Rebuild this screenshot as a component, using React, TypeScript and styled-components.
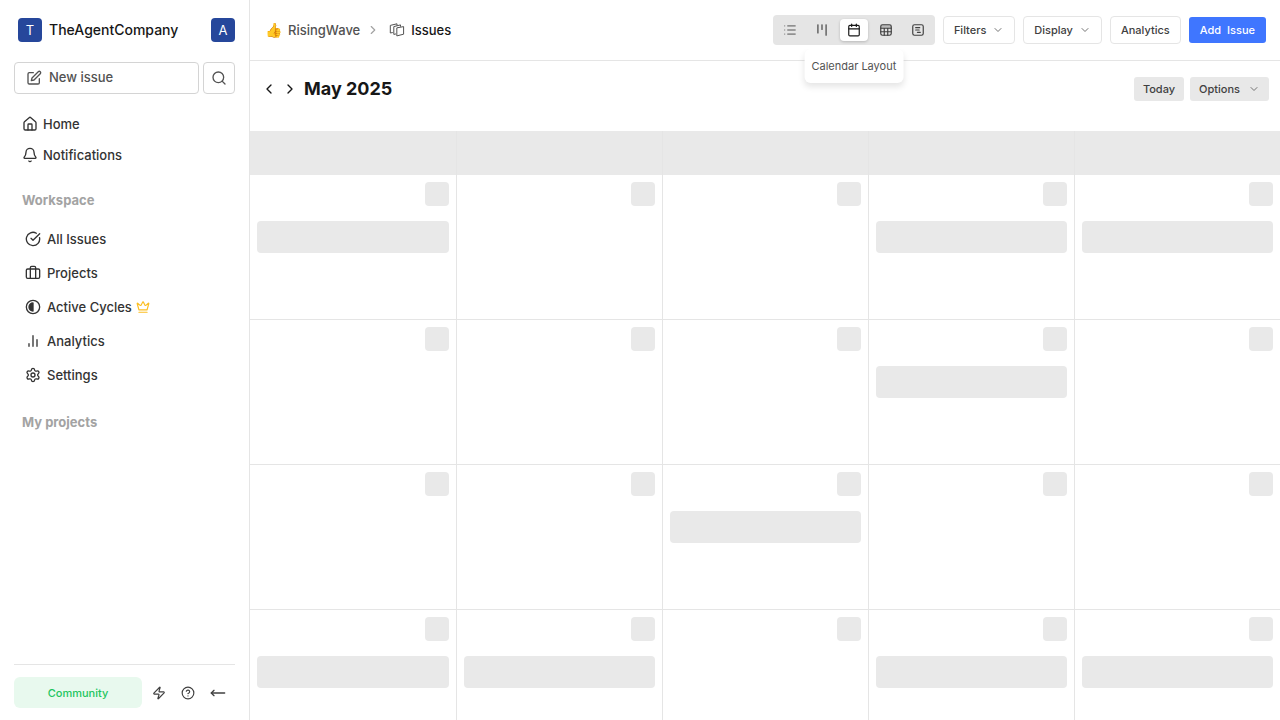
import React from "react";
import styled, { createGlobalStyle } from "styled-components";
import {
  Bell,
  Briefcase,
  Calendar,
  ChevronDown,
  ChevronLeft,
  ChevronRight,
  CircleCheckBig,
  CircleHelp,
  Crown,
  House,
  Kanban,
  List,
  MoveLeft,
  Search,
  Settings,
  Zap,
} from "lucide-react";

const GlobalStyle = createGlobalStyle`
  *, *::before, *::after { box-sizing: border-box; }
  body { margin: 0; background: #fff; color: #171717; font-family: Inter, "Liberation Sans", sans-serif; }
  button { font: inherit; color: inherit; margin: 0; padding: 0; border: 0; background: none; cursor: pointer; }
  a { color: inherit; text-decoration: none; }
  svg { flex-shrink: 0; }
`;

const Shell = styled.div`
  display: flex;
  height: 100vh;
  overflow: hidden;
`;

const Sidebar = styled.aside`
  display: flex;
  flex-direction: column;
  flex: 0 0 250px;
  padding: 0 14px;
  border-right: 1px solid #e5e5e5;
`;

const WorkspaceRow = styled.div`
  display: flex;
  align-items: center;
  height: 24px;
  margin-top: 18px;
  padding-left: 4px;
`;

const Badge = styled.span`
  display: grid;
  place-items: center;
  width: 24px;
  height: 24px;
  border-radius: 4px;
  background: #26479b;
  color: #fff;
  font-size: 13px;
  line-height: 18px;
`;

const WorkspaceName = styled.span`
  flex: 1;
  margin-left: 7px;
  font-size: 14px;
  line-height: 20px;
  font-weight: 500;
`;

const QuickActions = styled.div`
  display: flex;
  gap: 4px;
  margin-top: 20px;
`;

const OutlineButton = styled.button<{ $grow?: boolean }>`
  display: flex;
  align-items: center;
  justify-content: ${(p) => (p.$grow ? "flex-start" : "center")};
  gap: 7px;
  flex: ${(p) => (p.$grow ? "1" : "0 0 32px")};
  height: 32px;
  padding: ${(p) => (p.$grow ? "0 11px" : "0")};
  border: 1px solid #d4d4d4;
  border-radius: 4px;
  color: #525252;
  font-size: 13px;
  line-height: 18px;
  font-weight: 500;

  span { padding-bottom: 3px; }
`;

const Nav = styled.nav<{ $inset?: boolean }>`
  display: flex;
  flex-direction: column;
  margin-top: ${(p) => (p.$inset ? "13px" : "14px")};
  padding-left: ${(p) => (p.$inset ? "11px" : "8px")};
`;

const NavLink = styled.a<{ $tall?: boolean }>`
  display: flex;
  align-items: center;
  height: ${(p) => (p.$tall ? "34px" : "31px")};
  color: #333;
  font-size: 13px;
  line-height: 18px;
  font-weight: 500;

  span { margin: 0 4px 0 ${(p) => (p.$tall ? "6px" : "5px")}; }
`;

const SectionTitle = styled.h2`
  margin: 21px 8px 0;
  color: #a3a3a3;
  font-size: 13px;
  line-height: 18px;
  font-weight: 700;
`;

const SidebarFooter = styled.footer`
  display: flex;
  align-items: center;
  margin-top: auto;
  padding: 12px 9px 12px 0;
  border-top: 1px solid #e5e5e5;
`;

const Plan = styled.button`
  width: 128px;
  height: 31px;
  margin-right: 10px;
  border-radius: 6px;
  background: #e8f9ee;
  color: #22c55e;
  font-size: 11px;
  line-height: 16px;
  font-weight: 500;
`;

const FooterIcons = styled.div`
  display: flex;
  flex: 1;
  justify-content: space-between;
  color: #404040;
`;

const IconButton = styled.button`
  display: grid;
  place-items: center;
`;

const Main = styled.main`
  display: flex;
  flex-direction: column;
  flex: 1;
  min-width: 0;
`;

const TopBar = styled.header`
  display: flex;
  align-items: center;
  flex: 0 0 61px;
  padding: 0 14px 0 15px;
  border-bottom: 1px solid #e5e5e5;
`;

const Breadcrumbs = styled.nav`
  display: flex;
  align-items: center;
  flex: 1;
  font-size: 13px;
  line-height: 18px;
  font-weight: 500;
`;

const Crumb = styled.a<{ $current?: boolean }>`
  display: flex;
  align-items: center;
  gap: 6px;
  color: ${(p) => (p.$current ? "#171717" : "#525252")};

  svg { color: #525252; }
`;

const CrumbDivider = styled.span`
  display: flex;
  margin: 0 9px 0 6px;
  color: #a3a3a3;
`;

const Emoji = styled.span`
  width: 17px;
  font-size: 14px;
  line-height: 18px;
`;

const Toolbar = styled.div`
  display: flex;
  align-items: center;
  gap: 8px;
`;

const LayoutSwitch = styled.div`
  display: flex;
  gap: 4px;
  padding: 4px 3px;
  border-radius: 4px;
  background: #e5e5e5;
`;

const LayoutOption = styled.button<{ $active?: boolean }>`
  position: relative;
  display: grid;
  place-items: center;
  width: 28px;
  height: 22px;
  border-radius: 4px;
  background: ${(p) => (p.$active ? "#fff" : "transparent")};
  color: ${(p) => (p.$active ? "#171717" : "#404040")};
  box-shadow: ${(p) => (p.$active ? "0 1px 3px rgba(0, 0, 0, 0.2)" : "none")};
`;

const Tooltip = styled.span`
  position: absolute;
  top: 30px;
  left: 50%;
  transform: translateX(-50%);
  padding: 9px 7px;
  border-radius: 6px;
  background: #fff;
  color: #525252;
  font-size: 11px;
  line-height: 16px;
  white-space: nowrap;
  box-shadow: 0 4px 6px rgba(0, 0, 0, 0.1);
  clip-path: inset(0 -12px -12px -12px);
`;

const BarButton = styled.button<{ $kind?: "primary" | "muted" }>`
  display: flex;
  align-items: center;
  gap: ${(p) => (p.$kind === "muted" ? "8px" : "6px")};
  height: ${(p) => (p.$kind === "primary" ? "26px" : p.$kind === "muted" ? "24px" : "28px")};
  padding: ${(p) => (p.$kind === "muted" ? "0 9px" : p.$kind === "primary" ? "0 11px" : "0 10px")};
  border: ${(p) => (p.$kind ? "0" : "1px solid #e5e5e5")};
  border-radius: ${(p) => (p.$kind ? "3px" : "4px")};
  background: ${(p) => (p.$kind === "primary" ? "#3f76ff" : p.$kind === "muted" ? "#e8e8e8" : "#fff")};
  color: ${(p) => (p.$kind === "primary" ? "#fff" : "#404040")};
  font-size: 11px;
  line-height: 16px;
  font-weight: 500;
  white-space: nowrap;

  svg { color: #737373; }
`;

const CalendarHeader = styled.div`
  display: flex;
  align-items: center;
  flex: 0 0 56px;
  gap: 6px;
  margin-bottom: 14px;
  padding: 0 11px;
`;

const MonthArrows = styled.div`
  display: flex;
  gap: 5px;
`;

const MonthTitle = styled.h1`
  flex: 1;
  margin: 0;
  font-size: 18px;
  line-height: 28px;
  font-weight: 700;
`;

const WeekGrid = styled.div`
  display: grid;
  flex-shrink: 0;
  grid-template-columns: repeat(5, 1fr);
`;

const Weekday = styled.div`
  height: 44px;
  background: #e9e9e9;

  & + & { border-left: 1px solid #e5e5e5; }
`;

const Day = styled.div`
  display: flex;
  flex-direction: column;
  align-items: flex-end;
  gap: 15px;
  height: 145px;
  padding: 7px;
  border-bottom: 1px solid #e5e5e5;

  & + & { border-left: 1px solid #e5e5e5; }
`;

const DatePlaceholder = styled.span`
  width: 24px;
  height: 24px;
  border-radius: 4px;
  background: #e9e9e9;
`;

const IssuePlaceholder = styled.span`
  align-self: stretch;
  height: 32px;
  border-radius: 4px;
  background: #e9e9e9;
`;

const stroke = {
  fill: "none",
  stroke: "currentColor",
  strokeLinecap: "round" as const,
  strokeLinejoin: "round" as const,
};

const ComposeIcon = () => (
  <svg width="16" height="16" viewBox="0 0 24 24" strokeWidth="2" {...stroke}>
    <path d="M11 4H5a2 2 0 0 0-2 2v13a2 2 0 0 0 2 2h13a2 2 0 0 0 2-2v-6" />
    <path d="M18.4 2.6a2.1 2.1 0 0 1 3 3L12 15l-4 1 1-4Z" />
  </svg>
);

const CycleIcon = () => (
  <svg width="16" height="16" viewBox="0 0 24 24" strokeWidth="2" {...stroke}>
    <circle cx="12" cy="12" r="10" />
    <path d="M12 6a6 6 0 0 0 0 12Z" fill="currentColor" />
  </svg>
);

const BarsIcon = () => (
  <svg width="16" height="16" viewBox="0 0 24 24" strokeWidth="2" {...stroke}>
    <path d="M18 20V10M12 20V4M6 20v-4" />
  </svg>
);

const LayersIcon = () => (
  <svg width="16" height="16" viewBox="0 0 16 16" strokeWidth="1" {...stroke}>
    <path d="M8.2 5.8 14.6 4.6v7.6l-6.4 1.6Z" />
    <path d="M6.6 12 4.8 12.4V4.6L11.5 2.9v1.4" />
    <path d="M3.4 10.6 1.3 11V3.4L8 1.8v1.4" />
  </svg>
);

const SheetIcon = () => (
  <svg width="14" height="14" viewBox="0 0 24 24" strokeWidth="2" {...stroke}>
    <path d="M3 3h18v6H3Z" fill="currentColor" fillOpacity="0.25" stroke="none" />
    <rect x="3" y="3" width="18" height="18" rx="3" />
    <path d="M3 9h18M3 15h18M9 9v12M15 9v12" />
  </svg>
);

const GanttIcon = () => (
  <svg width="14" height="14" viewBox="0 0 24 24" strokeWidth="2" {...stroke}>
    <rect x="3" y="3" width="18" height="18" rx="3" />
    <path d="M8 8h7M8 12h6M11 16h5" />
  </svg>
);

const workspaceLinks = [
  { label: "All Issues", icon: <CircleCheckBig size={16} /> },
  { label: "Projects", icon: <Briefcase size={16} /> },
  { label: "Active Cycles", icon: <CycleIcon />, premium: true },
  { label: "Analytics", icon: <BarsIcon /> },
  { label: "Settings", icon: <Settings size={16} /> },
];

const layouts = [
  { label: "List Layout", icon: <List size={14} strokeWidth={1.5} /> },
  { label: "Board Layout", icon: <Kanban size={14} /> },
  { label: "Calendar Layout", icon: <Calendar size={14} />, active: true },
  { label: "Spreadsheet Layout", icon: <SheetIcon /> },
  { label: "Gantt Layout", icon: <GanttIcon /> },
];

const weeks = [
  [true, false, false, true, true],
  [false, false, false, true, false],
  [false, false, true, false, false],
  [true, true, false, true, true],
];

export default function App() {
  return (
    <Shell>
      <GlobalStyle />
      <Sidebar>
        <WorkspaceRow>
          <Badge>T</Badge>
          <WorkspaceName>TheAgentCompany</WorkspaceName>
          <Badge>A</Badge>
        </WorkspaceRow>
        <QuickActions>
          <OutlineButton $grow>
            <ComposeIcon />
            <span>New issue</span>
          </OutlineButton>
          <OutlineButton aria-label="Search">
            <Search size={16} />
          </OutlineButton>
        </QuickActions>
        <Nav>
          <NavLink href="#home"><House size={16} /><span>Home</span></NavLink>
          <NavLink href="#notifications"><Bell size={16} /><span>Notifications</span></NavLink>
        </Nav>
        <SectionTitle>Workspace</SectionTitle>
        <Nav $inset>
          {workspaceLinks.map((item) => (
            <NavLink key={item.label} href="#workspace" $tall>
              {item.icon}
              <span>{item.label}</span>
              {item.premium && <Crown size={14} color="#fbbf24" />}
            </NavLink>
          ))}
        </Nav>
        <SectionTitle>My projects</SectionTitle>
        <SidebarFooter>
          <Plan>Community</Plan>
          <FooterIcons>
            <IconButton aria-label="Shortcuts"><Zap size={14} /></IconButton>
            <IconButton aria-label="Help"><CircleHelp size={14} /></IconButton>
            <IconButton aria-label="Collapse sidebar"><MoveLeft size={16} strokeWidth={2} /></IconButton>
          </FooterIcons>
        </SidebarFooter>
      </Sidebar>
      <Main>
        <TopBar>
          <Breadcrumbs aria-label="Breadcrumb">
            <Crumb href="#project"><Emoji>👍</Emoji>RisingWave</Crumb>
            <CrumbDivider><ChevronRight size={14} /></CrumbDivider>
            <Crumb href="#issues" $current><LayersIcon />Issues</Crumb>
          </Breadcrumbs>
          <Toolbar>
            <LayoutSwitch>
              {layouts.map((layout) => (
                <LayoutOption key={layout.label} $active={layout.active} aria-label={layout.label}>
                  {layout.icon}
                  {layout.active && <Tooltip role="tooltip">{layout.label}</Tooltip>}
                </LayoutOption>
              ))}
            </LayoutSwitch>
            <BarButton>Filters<ChevronDown size={12} /></BarButton>
            <BarButton>Display<ChevronDown size={12} /></BarButton>
            <BarButton>Analytics</BarButton>
            <BarButton $kind="primary"><span>Add</span><span>Issue</span></BarButton>
          </Toolbar>
        </TopBar>
        <CalendarHeader>
          <MonthArrows>
            <IconButton aria-label="Previous month"><ChevronLeft size={16} /></IconButton>
            <IconButton aria-label="Next month"><ChevronRight size={16} /></IconButton>
          </MonthArrows>
          <MonthTitle>May 2025</MonthTitle>
          <BarButton $kind="muted">Today</BarButton>
          <BarButton $kind="muted">Options<ChevronDown size={12} /></BarButton>
        </CalendarHeader>
        <WeekGrid>
          {weeks[0].map((_, i) => <Weekday key={i} />)}
        </WeekGrid>
        {weeks.map((week, w) => (
          <WeekGrid key={w}>
            {week.map((hasIssue, d) => (
              <Day key={d}>
                <DatePlaceholder />
                {hasIssue && <IssuePlaceholder />}
              </Day>
            ))}
          </WeekGrid>
        ))}
      </Main>
    </Shell>
  );
}
